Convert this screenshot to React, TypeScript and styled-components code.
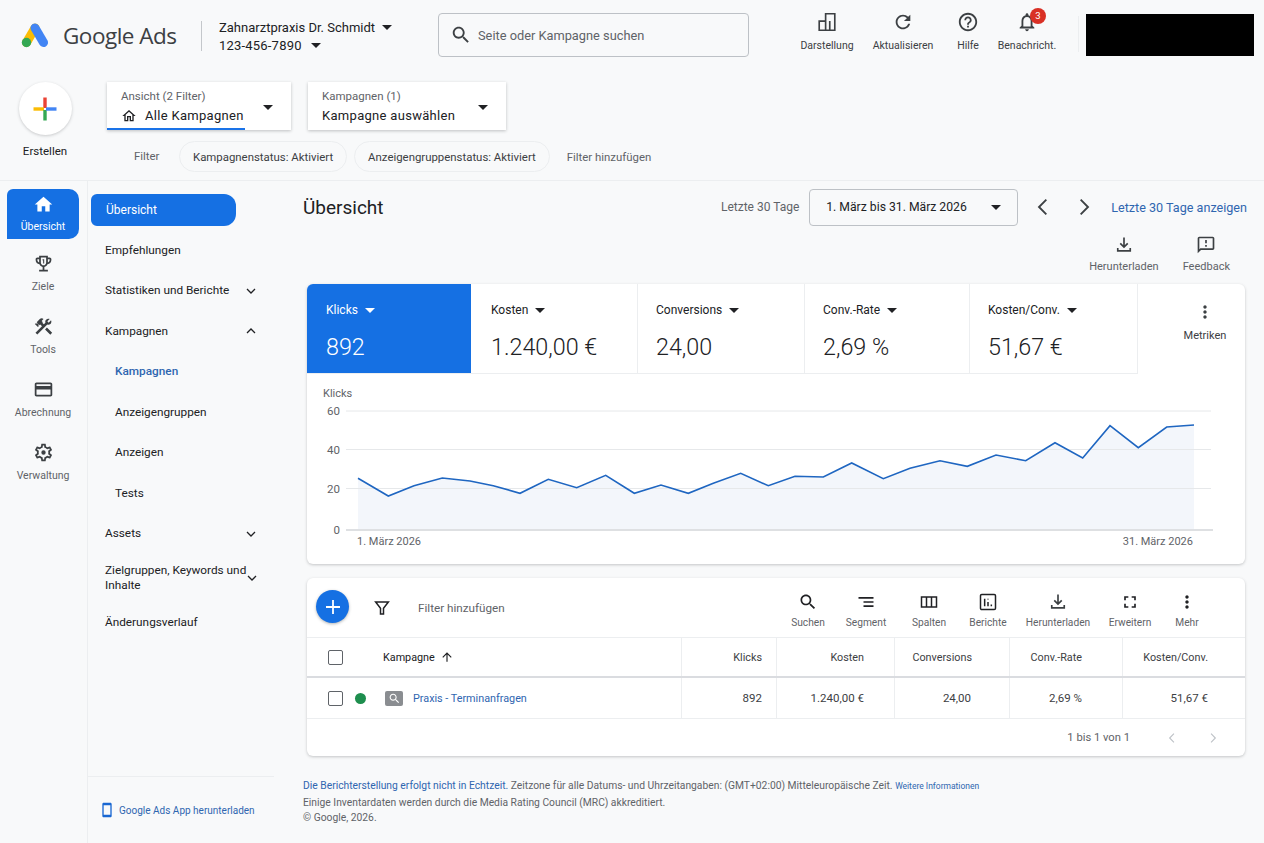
import React from "react";
import styled, { createGlobalStyle } from "styled-components";

const GlobalStyle = createGlobalStyle`
  html, body {
    margin: 0;
    padding: 0;
    background: #f8f9fa;
    font-family: Roboto, "Liberation Sans", sans-serif;
    color: #202124;
  }
  * { box-sizing: border-box; }
`;

const BLUE = "#1a73e8";
const LINK = "#2f66b0";

const Page = styled.div`
  width: 1264px;
  height: 843px;
  overflow: hidden;
  display: flex;
  flex-direction: column;
`;

/* top bar */
const TopBar = styled.header`
  height: 70px;
  display: flex;
  align-items: flex-start;
  padding: 13px 10px 0 21px;
`;
const Brand = styled.div`
  display: flex;
  align-items: center;
  gap: 14px;
  width: 180px;
  height: 44px;
  flex: none;
`;
const BrandName = styled.span`
  font-family: "Open Sans", Roboto, sans-serif;
  font-size: 22.5px;
  letter-spacing: -0.5px;
  color: #3c4043;
  white-space: nowrap;
`;
const AccountBox = styled.div`
  height: 30px;
  margin-top: 8px;
  border-left: 1px solid #c4c7cb;
  padding-left: 17px;
  width: 237px;
  flex: none;
  display: flex;
  flex-direction: column;
  justify-content: center;
  gap: 3px;
  font-size: 13px;
  color: #202124;
`;
const AccountLine = styled.div<{ $wide?: boolean }>`
  display: flex;
  align-items: center;
  gap: ${(p) => (p.$wide ? 9 : 7)}px;
  white-space: nowrap;
  line-height: 15px;
  letter-spacing: ${(p) => (p.$wide ? "0.2px" : "0")};
`;
const Caret = styled.span<{ $color?: string }>`
  display: inline-block;
  width: 0;
  height: 0;
  border-left: 5px solid transparent;
  border-right: 5px solid transparent;
  border-top: 5px solid ${(p) => p.$color || "#202124"};
  flex: none;
`;
const SearchBox = styled.div`
  width: 311px;
  height: 44px;
  flex: none;
  border: 1px solid #bdc1c6;
  border-radius: 4px;
  display: flex;
  align-items: center;
  gap: 6px;
  padding-left: 11px;
  font-size: 12.8px;
  color: #5f6368;
`;
const TopActions = styled.div`
  display: flex;
  flex: none;
  margin-left: 42px;
  margin-top: -3px;
`;
const TopAction = styled.div<{ $w: number }>`
  position: relative;
  width: ${(p) => p.$w}px;
  padding-top: 1px;
  display: flex;
  flex-direction: column;
  align-items: center;
  gap: 6px;
  font-size: 10.5px;
  color: #3c4043;
  white-space: nowrap;
`;
const Badge = styled.span`
  position: absolute;
  top: -2px;
  left: 50%;
  margin-left: 3px;
  width: 16px;
  height: 16px;
  border-radius: 50%;
  background: #d93025;
  color: #fff;
  font-size: 9.5px;
  line-height: 16px;
  text-align: center;
`;
const Redacted = styled.div`
  width: 168px;
  height: 42px;
  flex: none;
  margin-top: 1px;
  background: #000;
  margin-left: 7px;
`;
const ThinDivider = styled.div`
  width: 1px;
  height: 36px;
  flex: none;
  margin: 3px 0 0 17px;
  background: #eceef0;
`;

/* create + filter */
const CreateRow = styled.section`
  height: 111px;
  display: flex;
  border-bottom: 1px solid #eceef0;
`;
const CreateCol = styled.div`
  width: 90px;
  display: flex;
  flex-direction: column;
  align-items: center;
  gap: 9px;
  font-size: 11.5px;
`;
const CreateButton = styled.div`
  width: 53px;
  height: 53px;
  margin-top: 12px;
  border-radius: 50%;
  background: #fff;
  box-shadow: 0 1px 3px rgba(60, 64, 67, 0.25);
  display: flex;
  align-items: center;
  justify-content: center;
`;
const SelectCol = styled.div`
  padding: 12px 0 0 17px;
  display: flex;
  flex-direction: column;
  gap: 11px;
`;
const SelectRow = styled.div`
  display: flex;
  gap: 17px;
`;
const SelectCard = styled.div<{ $w: number }>`
  position: relative;
  width: ${(p) => p.$w}px;
  height: 48px;
  background: #fff;
  box-shadow: 0 1px 3px rgba(60, 64, 67, 0.3);
  padding: 3px 18px 0 14px;
  display: flex;
  align-items: center;
  justify-content: space-between;
`;
const SelectUnderline = styled.span`
  position: absolute;
  left: 0;
  bottom: 0;
  width: 138px;
  height: 2px;
  background: ${BLUE};
`;
const SelectHint = styled.div`
  font-size: 11.5px;
  color: #5f6368;
  margin-bottom: 5px;
  margin-top: -3px;
`;
const SelectValue = styled.div`
  display: flex;
  align-items: center;
  gap: 8px;
  font-size: 13px;
  letter-spacing: 0.3px;
  color: #202124;
  white-space: nowrap;
`;
const FilterRow = styled.div`
  display: flex;
  align-items: center;
  padding-left: 27px;
  font-size: 11.4px;
  color: #5f6368;
`;
const Chip = styled.span`
  height: 31px;
  border: 1px solid #eceef0;
  border-radius: 16px;
  padding: 0 13px;
  margin-right: 7px;
  display: flex;
  align-items: center;
  color: #3c4043;
  white-space: nowrap;
`;
const FilterLabel = styled.span`
  width: 45px;
  margin-top: -1px;
`;
const FilterAdd = styled.span`
  margin-left: 10px;
`;

/* body */
const Body = styled.div`
  flex: 1;
  display: flex;
  min-height: 0;
`;
const Rail = styled.nav`
  width: 88px;
  flex: none;
  border-right: 1px solid #eceef0;
  padding: 8px 0 0 7px;
  display: flex;
  flex-direction: column;
  gap: 13px;
`;
const RailItem = styled.div<{ $active?: boolean }>`
  width: 72px;
  height: 50px;
  border-radius: 6px 10px 10px 0;
  background: ${(p) => (p.$active ? "#1570e3" : "transparent")};
  color: ${(p) => (p.$active ? "#fff" : "#5f6368")};
  display: flex;
  flex-direction: column;
  align-items: center;
  padding-top: ${(p) => (p.$active ? 5 : 1)}px;
  gap: ${(p) => (p.$active ? 5 : 6)}px;
  font-size: 10.5px;
  svg {
    color: ${(p) => (p.$active ? "#fff" : "#3c4043")};
  }
`;
const SubNav = styled.nav`
  width: 187px;
  flex: none;
  display: flex;
  flex-direction: column;
  padding-top: 13px;
`;
const NavPill = styled.div`
  width: 145px;
  height: 32px;
  margin-left: 3px;
  border-radius: 6px 12px 12px 6px;
  background: #1570e3;
  color: #fff;
  padding: 0 0 1px 15px;
  display: flex;
  align-items: center;
  font-size: 12px;
  margin-bottom: 4px;
`;
const NavItem = styled.div<{ $indent?: boolean; $link?: boolean; $h?: number }>`
  height: ${(p) => p.$h || 40.5}px;
  padding-left: ${(p) => (p.$indent ? 27 : 17)}px;
  padding-right: 18px;
  display: flex;
  align-items: center;
  justify-content: space-between;
  font-size: 11.8px;
  line-height: 15px;
  white-space: nowrap;
  color: ${(p) => (p.$link ? LINK : "#202124")};
  font-weight: ${(p) => (p.$link ? 500 : 400)};
`;
const NavFoot = styled.div`
  margin: auto 1px 0 0;
  height: 67px;
  border-top: 1px solid #eceef0;
  display: flex;
  align-items: center;
  gap: 4px;
  padding-left: 11px;
  font-size: 10px;
  color: ${LINK};
  white-space: nowrap;
`;
const Main = styled.main`
  flex: 1;
  padding: 8px 17px 0 28px;
  display: flex;
  flex-direction: column;
`;
const TitleRow = styled.div`
  height: 36px;
  display: flex;
  align-items: center;
`;
const Title = styled.h1`
  margin: 0;
  font-size: 19px;
  font-weight: 400;
  color: #202124;
  margin-right: auto;
`;
const RangeLabel = styled.span`
  font-size: 12px;
  color: #5f6368;
  margin-right: 10px;
`;
const RangeBox = styled.div`
  width: 209px;
  height: 37px;
  border: 1px solid #bdc1c6;
  border-radius: 4px;
  display: flex;
  align-items: center;
  justify-content: space-between;
  padding: 0 16px;
  font-size: 12.2px;
  color: #202124;
`;
const ArrowPair = styled.div`
  display: flex;
  gap: 17px;
  margin: 0 15px 0 13px;
`;
const RangeLink = styled.span`
  font-size: 12.6px;
  color: ${LINK};
  white-space: nowrap;
`;
const ActionRow = styled.div`
  height: 59px;
  display: flex;
  justify-content: flex-end;
  padding: 10px 17px 0 0;
  gap: 24px;
`;
const ToolAction = styled.div<{ $w?: number; $small?: boolean }>`
  width: ${(p) => (p.$w ? `${p.$w}px` : "auto")};
  display: flex;
  flex-direction: column;
  align-items: center;
  gap: 4.5px;
  font-size: ${(p) => (p.$small ? 10.2 : 11)}px;
  color: #5f6368;
  white-space: nowrap;
`;
const Card = styled.section<{ $h: number }>`
  width: 938px;
  height: ${(p) => p.$h}px;
  margin-left: 4px;
  background: #fff;
  border-radius: 6px;
  box-shadow: 0 1px 3px rgba(60, 64, 67, 0.28);
  overflow: hidden;
`;
const Tiles = styled.div`
  height: 90px;
  display: flex;
`;
const Tile = styled.div<{ $w: number; $pad: number; $active?: boolean }>`
  width: ${(p) => p.$w}px;
  height: 90px;
  padding: 19px 0 0 ${(p) => p.$pad}px;
  background: ${(p) => (p.$active ? "#1570e3" : "#fff")};
  color: ${(p) => (p.$active ? "#fff" : "#202124")};
  border-right: ${(p) => (p.$active ? "none" : "1px solid #eceef0")};
  border-bottom: 1px solid #eceef0;
`;
const TileLabel = styled.div`
  display: flex;
  align-items: center;
  gap: 7px;
  font-size: 12px;
  line-height: 15px;
`;
const TileValue = styled.div`
  margin-top: 14px;
  font-size: 23.3px;
  font-weight: 300;
  line-height: 30px;
`;
const MetricsButton = styled.div`
  flex: 1;
  display: flex;
  flex-direction: column;
  align-items: center;
  padding: 18px 0 0 27px;
  gap: 7px;
  font-size: 11px;
  color: #3c4043;
`;
const ChartSvg = styled.svg`
  display: block;
  font-family: Roboto, sans-serif;
`;
const Gap = styled.div`
  height: 14px;
  flex: none;
`;
const TableBar = styled.div`
  height: 60px;
  display: flex;
  align-items: center;
  border-bottom: 1px solid #eceef0;
  padding-left: 9px;
`;
const Fab = styled.div`
  width: 33px;
  height: 33px;
  margin-top: -2px;
  border-radius: 50%;
  background: #1570e3;
  box-shadow: 0 1px 3px rgba(60, 64, 67, 0.4);
  display: flex;
  align-items: center;
  justify-content: center;
  margin-right: 24px;
`;
const TableFilter = styled.span`
  font-size: 11.7px;
  color: #5f6368;
  margin-left: 27px;
  margin-right: auto;
`;
const BarActions = styled.div`
  display: flex;
  padding: 5px 28px 0 0;
`;
const Row = styled.div<{ $h: number; $heavy?: boolean }>`
  height: ${(p) => p.$h}px;
  display: grid;
  grid-template-columns: 374px 95px 118px 115px 113px 1fr;
  border-bottom: ${(p) => (p.$heavy ? "2px solid #dadce0" : "1px solid #eceef0")};
`;
const Cell = styled.div<{ $pad?: number; $head?: boolean }>`
  border-left: 1px solid #eceef0;
  display: flex;
  align-items: center;
  justify-content: flex-end;
  padding-right: ${(p) => p.$pad ?? 14}px;
  font-size: ${(p) => (p.$head ? 10.8 : 11.5)}px;
  color: #3c4043;
`;
const NameCell = styled.div`
  display: flex;
  align-items: center;
  padding-left: 21px;
  font-size: 10.8px;
  color: #202124;
`;
const Check = styled.span`
  width: 15px;
  height: 15px;
  border: 1.5px solid #5f6368;
  border-radius: 2px;
  flex: none;
  background: #fff;
`;
const StatusDot = styled.span`
  width: 11px;
  height: 11px;
  border-radius: 50%;
  background: #1e8e4e;
  margin: 0 19px 0 12px;
  flex: none;
`;
const TypeIcon = styled.span`
  width: 18px;
  height: 15px;
  border-radius: 2px;
  background: #8a8d91;
  display: flex;
  align-items: center;
  justify-content: center;
  margin-right: 10px;
  flex: none;
`;
const CampaignLink = styled.span`
  color: ${LINK};
  font-size: 10.8px;
`;
const HeadName = styled.span`
  margin-left: 40px;
  display: flex;
  align-items: center;
  gap: 5px;
`;
const Pager = styled.div`
  height: 37px;
  display: flex;
  align-items: center;
  justify-content: flex-end;
  padding-right: 25px;
  font-size: 11.2px;
  color: #5f6368;
  gap: 35px;
`;
const PagerArrows = styled.div`
  display: flex;
  gap: 27px;
`;
const Footer = styled.footer`
  margin-top: 22px;
  font-size: 10.3px;
  line-height: 15.5px;
  color: #5f6368;
  white-space: nowrap;
`;
const FootLink = styled.span`
  color: ${LINK};
`;
const TinyLink = styled.span`
  color: ${LINK};
  font-size: 8.5px;
`;

const Icon: React.FC<{ size?: number; d: string; color?: string }> = ({ size = 24, d, color = "currentColor" }) => (
  <svg width={size} height={size} viewBox="0 0 24 24" fill={color}>
    <path d={d} />
  </svg>
);

const ChevronDown = ({ up }: { up?: boolean }) => (
  <svg width="12" height="12" viewBox="0 0 12 12" fill="none" stroke="#202124" strokeWidth="1.3" style={{ flex: "none" }}>
    <path d={up ? "M2 8l4-4 4 4" : "M2 4l4 4 4-4"} />
  </svg>
);
const ChevronSide = ({ left, size = 18, color = "#3c4043" }: { left?: boolean; size?: number; color?: string }) => (
  <svg width={size} height={size} viewBox="0 0 18 18" fill="none" stroke={color} strokeWidth="1.4">
    <path d={left ? "M11.5 3.5L6 9l5.5 5.5" : "M6.5 3.5L12 9l-5.5 5.5"} />
  </svg>
);

const P = {
  home: "M12 5.69l5 4.5V18h-2v-6H9v6H7v-7.81l5-4.5M12 3L2 12h3v8h6v-6h2v6h6v-8h3L12 3z",
  homeFill: "M10 20v-6h4v6h5v-8h3L12 3 2 12h3v8z",
  search:
    "M15.5 14h-.79l-.28-.27C15.41 12.59 16 11.11 16 9.5 16 5.91 13.09 3 9.5 3S3 5.91 3 9.5 5.91 16 9.5 16c1.61 0 3.09-.59 4.23-1.57l.27.28v.79l5 4.99L20.49 19l-4.99-5zm-6 0C7.01 14 5 11.99 5 9.5S7.01 5 9.5 5 14 7.01 14 9.5 11.99 14 9.5 14z",
  refresh:
    "M17.65 6.35C16.2 4.9 14.21 4 12 4c-4.42 0-7.99 3.58-7.99 8s3.57 8 7.99 8c3.73 0 6.84-2.55 7.73-6h-2.08c-.82 2.33-3.04 4-5.65 4-3.31 0-6-2.69-6-6s2.69-6 6-6c1.66 0 3.14.69 4.22 1.78L13 11h7V4l-2.35 2.35z",
  help: "M11 18h2v-2h-2v2zm1-16C6.48 2 2 6.48 2 12s4.48 10 10 10 10-4.48 10-10S17.52 2 12 2zm0 18c-4.41 0-8-3.59-8-8s3.59-8 8-8 8 3.59 8 8-3.59 8-8 8zm0-14c-2.21 0-4 1.79-4 4h2c0-1.1.9-2 2-2s2 .9 2 2c0 2-3 1.75-3 5h2c0-2.25 3-2.5 3-5 0-2.21-1.79-4-4-4z",
  bell: "M12 22c1.1 0 2-.9 2-2h-4c0 1.1.9 2 2 2zm6-6v-5c0-3.07-1.63-5.64-4.5-6.32V4c0-.83-.67-1.5-1.5-1.5s-1.5.67-1.5 1.5v.68C7.64 5.36 6 7.92 6 11v5l-2 2v1h16v-1l-2-2zm-2 1H8v-6c0-2.48 1.51-4.5 4-4.5s4 2.02 4 4.5v6z",
  more: "M12 8c1.1 0 2-.9 2-2s-.9-2-2-2-2 .9-2 2 .9 2 2 2zm0 2c-1.1 0-2 .9-2 2s.9 2 2 2 2-.9 2-2-.9-2-2-2zm0 6c-1.1 0-2 .9-2 2s.9 2 2 2 2-.9 2-2-.9-2-2-2z",
  card: "M20 4H4c-1.11 0-1.99.89-1.99 2L2 18c0 1.11.89 2 2 2h16c1.11 0 2-.89 2-2V6c0-1.11-.89-2-2-2zm0 14H4v-6h16v6zm0-10H4V6h16v2z",
  gear: "M19.43 12.98c.04-.32.07-.64.07-.98 0-.34-.03-.66-.07-.98l2.11-1.65c.19-.15.24-.42.12-.64l-2-3.46c-.09-.16-.26-.25-.44-.25-.06 0-.12.01-.17.03l-2.49 1c-.52-.4-1.08-.73-1.69-.98l-.38-2.65C14.46 2.18 14.25 2 14 2h-4c-.25 0-.46.18-.49.42l-.38 2.65c-.61.25-1.17.59-1.69.98l-2.49-1c-.06-.02-.12-.03-.18-.03-.17 0-.34.09-.43.25l-2 3.46c-.13.22-.07.49.12.64l2.11 1.65c-.04.32-.07.65-.07.98 0 .33.03.66.07.98l-2.11 1.65c-.19.15-.24.42-.12.64l2 3.46c.09.16.26.25.44.25.06 0 .12-.01.17-.03l2.49-1c.52.4 1.08.73 1.69.98l.38 2.65c.03.24.24.42.49.42h4c.25 0 .46-.18.49-.42l.38-2.65c.61-.25 1.17-.59 1.69-.98l2.49 1c.06.02.12.03.18.03.17 0 .34-.09.43-.25l2-3.46c.12-.22.07-.49-.12-.64l-2.11-1.65zm-1.98-1.71c.04.31.05.52.05.73 0 .21-.02.43-.05.73l-.14 1.13.89.7 1.08.84-.7 1.21-1.27-.51-1.04-.42-.9.68c-.43.32-.84.56-1.25.73l-1.06.43-.16 1.13-.2 1.35h-1.4l-.19-1.35-.16-1.13-1.06-.43c-.43-.18-.83-.41-1.23-.71l-.91-.7-1.06.43-1.27.51-.7-1.21 1.08-.84.89-.7-.14-1.13c-.03-.31-.05-.54-.05-.74s.02-.43.05-.73l.14-1.13-.89-.7-1.08-.84.7-1.21 1.27.51 1.04.42.9-.68c.43-.32.84-.56 1.25-.73l1.06-.43.16-1.13.2-1.35h1.39l.19 1.35.16 1.13 1.06.43c.43.18.83.41 1.23.71l.91.7 1.06-.43 1.27-.51.7 1.21-1.07.85-.89.7.14 1.13zM12 9.5a2.5 2.5 0 1 0 0 5 2.5 2.5 0 0 0 0-5z",
  trophy:
    "M19 5h-2V3H7v2H5c-1.1 0-2 .9-2 2v1c0 2.55 1.92 4.63 4.39 4.94.63 1.5 1.98 2.63 3.61 2.96V19H7v2h10v-2h-4v-3.1c1.63-.33 2.98-1.46 3.61-2.96C19.08 12.63 21 10.55 21 8V7c0-1.1-.9-2-2-2zM5 8V7h2v3.82C5.84 10.4 5 9.3 5 8zm7 6c-1.65 0-3-1.35-3-3V5h6v6c0 1.65-1.35 3-3 3zm7-6c0 1.3-.84 2.4-2 2.82V7h2v1zM11.6 7h1.2v5h-1.2V8.2h-1V7.6z",
  tools:
    "M13.78 15.3l6 6 2.11-2.16-6-6zM17.5 10c1.93 0 3.5-1.57 3.5-3.5 0-.58-.16-1.12-.41-1.6l-2.7 2.7-1.49-1.49 2.7-2.7c-.48-.25-1.02-.41-1.6-.41C15.57 3 14 4.57 14 6.5c0 .41.08.8.21 1.16l-1.85 1.85-1.78-1.78.71-.71-1.41-1.41L12 3.49c-1.17-1.17-3.07-1.17-4.24 0L4.22 7.03l1.41 1.41H2.81l-.71.71 3.54 3.54.71-.71V9.15l1.41 1.41.71-.71 1.78 1.78-7.41 7.41 2.12 2.12L16.34 9.79c.36.13.75.21 1.16.21z",
  download: "M12 3v11.2M7.5 10l4.5 4.5 4.5-4.5M4.5 15.5V19h15v-3.5",
  feedback:
    "M20 2H4c-1.1 0-2 .9-2 2v18l4-4h14c1.1 0 2-.9 2-2V4c0-1.1-.9-2-2-2zm0 14H5.17L4 17.17V4h16v12zM11 12h2v2h-2zm0-6h2v4h-2z",
  segment: "M9 18h12v-2H9v2zM3 6v2h18V6H3zm6 7h12v-2H9v2z",
  fullscreen: "M7 14H5v5h5v-2H7v-3zm-2-4h2V7h3V5H5v5zm12 7h-3v2h5v-5h-2v3zM14 5v2h3v3h2V5h-5z",
  arrowUp: "M4 12l1.41 1.41L11 7.83V20h2V7.83l5.58 5.59L20 12l-8-8-8 8z",
  phone: "M17 1.01L7 1c-1.1 0-2 .9-2 2v18c0 1.1.9 2 2 2h10c1.1 0 2-.9 2-2V3c0-1.1-.9-1.99-2-1.99zM17 19H7V5h10v14z",
};

const DownloadIcon = () => (
  <svg width="20" height="20" viewBox="0 0 24 24" fill="none" stroke="#3c4043" strokeWidth="2">
    <path d={P.download} />
  </svg>
);

const AdsLogo = () => (
  <svg width="28" height="26" viewBox="0 0 28 26" style={{ flex: "none" }}>
    <line x1="14" y1="6" x2="5.5" y2="20.5" stroke="#fbbc04" strokeWidth="9" strokeLinecap="round" />
    <line x1="14" y1="6" x2="22.5" y2="20.5" stroke="#4285f4" strokeWidth="9" strokeLinecap="round" />
    <circle cx="5.5" cy="20.5" r="4.7" fill="#34a853" />
  </svg>
);

const ColorPlus = () => (
  <svg width="26" height="26" viewBox="0 0 26 26" fill="none" strokeWidth="3.4">
    <path d="M13 1.5V12" stroke="#ea4335" />
    <path d="M1.5 13H12" stroke="#fbbc04" />
    <path d="M13 14v10.5" stroke="#34a853" />
    <path d="M14 13h10.5" stroke="#4285f4" />
  </svg>
);

const DarstellungIcon = () => (
  <svg width="22" height="22" viewBox="0 0 24 24" fill="none" stroke="#3c4043" strokeWidth="1.8">
    <path d="M3.5 11h7v10h-7zM10.5 3h10v18h-10zM15 11v10" />
  </svg>
);
const ColumnsIcon = () => (
  <svg width="20" height="20" viewBox="0 0 24 24" fill="none" stroke="#202124" strokeWidth="1.8">
    <path d="M3 6h18v12H3zM9 6v12M15 6v12" />
  </svg>
);
const ReportIcon = () => (
  <svg width="20" height="20" viewBox="0 0 24 24" fill="none" stroke="#202124" strokeWidth="1.8">
    <rect x="3" y="3" width="18" height="18" rx="1.5" />
    <path d="M8 8v9M12 12v5M16 15v2M12 8v1" />
  </svg>
);
const FunnelIcon = () => (
  <svg width="18" height="18" viewBox="0 0 24 24" fill="none" stroke="#202124" strokeWidth="2">
    <path d="M3.5 4h17L14 12.5V20h-4v-7.5z" />
  </svg>
);

const navItems: { label: React.ReactNode; chev?: "up" | "down"; indent?: boolean; link?: boolean; h?: number }[] = [
  { label: "Empfehlungen" },
  { label: "Statistiken und Berichte", chev: "down" },
  { label: "Kampagnen", chev: "up" },
  { label: "Kampagnen", indent: true, link: true },
  { label: "Anzeigengruppen", indent: true },
  { label: "Anzeigen", indent: true },
  { label: "Tests", indent: true },
  { label: "Assets", chev: "down" },
  { label: <>Zielgruppen, Keywords und<br />Inhalte</>, chev: "down", h: 48 },
  { label: "Änderungsverlauf", h: 40 },
];

const tiles = [
  { label: "Klicks", value: "892", w: 164, pad: 19 },
  { label: "Kosten", value: "1.240,00 €", w: 167, pad: 20 },
  { label: "Conversions", value: "24,00", w: 167, pad: 18 },
  { label: "Conv.-Rate", value: "2,69 %", w: 165, pad: 18 },
  { label: "Kosten/Conv.", value: "51,67 €", w: 168, pad: 18 },
];

const barActions = [
  { label: "Suchen", w: 58, icon: <Icon size={20} d={P.search} color="#202124" /> },
  { label: "Segment", w: 58, icon: <Icon size={20} d={P.segment} color="#202124" /> },
  { label: "Spalten", w: 68, icon: <ColumnsIcon /> },
  { label: "Berichte", w: 50, icon: <ReportIcon /> },
  { label: "Herunterladen", w: 90, icon: <DownloadIcon /> },
  { label: "Erweitern", w: 54, icon: <Icon size={20} d={P.fullscreen} color="#202124" /> },
  { label: "Mehr", w: 60, icon: <Icon size={20} d={P.more} color="#202124" /> },
];

const clicks: [number, number][] = [
  [358, 478.3], [388.3, 496], [414, 485.7], [442.3, 478], [470, 481], [493.3, 485.7], [520, 493.3],
  [548.3, 479.3], [576.7, 487.7], [605.7, 475.3], [634.3, 493.3], [661, 485], [688.3, 493.3],
  [713.3, 483.3], [740.7, 473.3], [768.3, 485.7], [795, 476.3], [823.3, 477], [851.7, 463],
  [883.3, 478.7], [910, 468.3], [940, 460.7], [967.3, 466.3], [996, 455], [1025.7, 460.7],
  [1055, 442.7], [1082.7, 458], [1110, 425.7], [1138.3, 447.7], [1166.7, 427], [1194, 425],
];

const Chart = () => {
  const line = clicks.map((p) => p.join(",")).join(" ");
  const grid: [string, number][] = [["60", 411], ["40", 449.5], ["20", 488.5]];
  return (
    <ChartSvg width="938" height="190" viewBox="307 374 938 190">
      <polygon points={`358,529 ${line} 1194,529`} fill="#f3f6fb" />
      <text x="323" y="397" fontSize="11" fill="#5f6368">Klicks</text>
      {grid.map(([label, y]) => (
        <g key={label}>
          <line x1="346" x2="1211" y1={y} y2={y} stroke="#e6e8ea" />
          <text x="340" y={y + 4} fontSize="11.5" fill="#5f6368" textAnchor="end">{label}</text>
        </g>
      ))}
      <line x1="346" x2="1213" y1="530" y2="530" stroke="#bdc1c6" />
      <text x="340" y="534" fontSize="11.5" fill="#5f6368" textAnchor="end">0</text>
      <polyline points={line} fill="none" stroke="#1f66c1" strokeWidth="1.6" />
      <text x="357" y="545" fontSize="11" fill="#5f6368">1. März 2026</text>
      <text x="1193" y="545" fontSize="11" fill="#5f6368" textAnchor="end">31. März 2026</text>
    </ChartSvg>
  );
};

export default function App() {
  return (
    <Page>
      <GlobalStyle />
      <TopBar>
        <Brand>
          <AdsLogo />
          <BrandName>Google Ads</BrandName>
        </Brand>
        <AccountBox>
          <AccountLine>Zahnarztpraxis Dr. Schmidt <Caret /></AccountLine>
          <AccountLine $wide>123-456-7890 <Caret /></AccountLine>
        </AccountBox>
        <SearchBox>
          <Icon size={22} d={P.search} color="#3c4043" />
          Seite oder Kampagne suchen
        </SearchBox>
        <TopActions>
          <TopAction $w={72}><DarstellungIcon />Darstellung</TopAction>
          <TopAction $w={80}><Icon size={22} d={P.refresh} color="#3c4043" />Aktualisieren</TopAction>
          <TopAction $w={50}><Icon size={22} d={P.help} color="#3c4043" />Hilfe</TopAction>
          <TopAction $w={68}>
            <Icon size={22} d={P.bell} color="#3c4043" />
            <Badge>3</Badge>
            Benachricht.
          </TopAction>
        </TopActions>
        <ThinDivider />
        <Redacted />
      </TopBar>

      <CreateRow>
        <CreateCol>
          <CreateButton><ColorPlus /></CreateButton>
          Erstellen
        </CreateCol>
        <SelectCol>
          <SelectRow>
            <SelectCard $w={184}>
              <div>
                <SelectHint>Ansicht (2 Filter)</SelectHint>
                <SelectValue><Icon size={16} d={P.home} color="#202124" />Alle Kampagnen</SelectValue>
              </div>
              <Caret />
              <SelectUnderline />
            </SelectCard>
            <SelectCard $w={198}>
              <div>
                <SelectHint>Kampagnen (1)</SelectHint>
                <SelectValue>Kampagne auswählen</SelectValue>
              </div>
              <Caret />
            </SelectCard>
          </SelectRow>
          <FilterRow>
            <FilterLabel>Filter</FilterLabel>
            <Chip>Kampagnenstatus: Aktiviert</Chip>
            <Chip>Anzeigengruppenstatus: Aktiviert</Chip>
            <FilterAdd>Filter hinzufügen</FilterAdd>
          </FilterRow>
        </SelectCol>
      </CreateRow>

      <Body>
        <Rail>
          <RailItem $active><Icon size={21} d={P.homeFill} />Übersicht</RailItem>
          <RailItem><Icon size={21} d={P.trophy} />Ziele</RailItem>
          <RailItem><Icon size={21} d={P.tools} />Tools</RailItem>
          <RailItem><Icon size={21} d={P.card} />Abrechnung</RailItem>
          <RailItem><Icon size={21} d={P.gear} />Verwaltung</RailItem>
        </Rail>
        <SubNav>
          <NavPill>Übersicht</NavPill>
          {navItems.map((item, i) => (
            <NavItem key={i} $indent={item.indent} $link={item.link} $h={item.h}>
              <span>{item.label}</span>
              {item.chev && <ChevronDown up={item.chev === "up"} />}
            </NavItem>
          ))}
          <NavFoot>
            <Icon size={16} d={P.phone} color="#1967d2" />
            Google Ads App herunterladen
          </NavFoot>
        </SubNav>
        <Main>
          <TitleRow>
            <Title>Übersicht</Title>
            <RangeLabel>Letzte 30 Tage</RangeLabel>
            <RangeBox>1. März bis 31. März 2026 <Caret /></RangeBox>
            <ArrowPair>
              <ChevronSide left size={24} />
              <ChevronSide size={24} />
            </ArrowPair>
            <RangeLink>Letzte 30 Tage anzeigen</RangeLink>
          </TitleRow>
          <ActionRow>
            <ToolAction><DownloadIcon />Herunterladen</ToolAction>
            <ToolAction><Icon size={20} d={P.feedback} color="#3c4043" />Feedback</ToolAction>
          </ActionRow>

          <Card $h={280}>
            <Tiles>
              {tiles.map((t, i) => (
                <Tile key={t.label} $w={t.w} $pad={t.pad} $active={i === 0}>
                  <TileLabel>{t.label} <Caret $color={i === 0 ? "#fff" : "#202124"} /></TileLabel>
                  <TileValue>{t.value}</TileValue>
                </Tile>
              ))}
              <MetricsButton>
                <Icon size={20} d={P.more} color="#3c4043" />
                Metriken
              </MetricsButton>
            </Tiles>
            <Chart />
          </Card>

          <Gap />

          <Card $h={178}>
            <TableBar>
              <Fab>
                <svg width="18" height="18" viewBox="0 0 18 18" stroke="#fff" strokeWidth="1.8">
                  <path d="M9 2v14M2 9h14" />
                </svg>
              </Fab>
              <FunnelIcon />
              <TableFilter>Filter hinzufügen</TableFilter>
              <BarActions>
                {barActions.map((a) => (
                  <ToolAction key={a.label} $w={a.w} $small>{a.icon}{a.label}</ToolAction>
                ))}
              </BarActions>
            </TableBar>
            <Row $h={40} $heavy>
              <NameCell>
                <Check />
                <HeadName>Kampagne <Icon size={14} d={P.arrowUp} color="#202124" /></HeadName>
              </NameCell>
              <Cell $head>Klicks</Cell>
              <Cell $head $pad={30}>Kosten</Cell>
              <Cell $head $pad={37}>Conversions</Cell>
              <Cell $head $pad={40}>Conv.-Rate</Cell>
              <Cell $head $pad={37}>Kosten/Conv.</Cell>
            </Row>
            <Row $h={41}>
              <NameCell>
                <Check />
                <StatusDot />
                <TypeIcon><Icon size={13} d={P.search} color="#fff" /></TypeIcon>
                <CampaignLink>Praxis - Terminanfragen</CampaignLink>
              </NameCell>
              <Cell>892</Cell>
              <Cell $pad={30}>1.240,00 €</Cell>
              <Cell $pad={38}>24,00</Cell>
              <Cell $pad={40}>2,69 %</Cell>
              <Cell $pad={37}>51,67 €</Cell>
            </Row>
            <Pager>
              1 bis 1 von 1
              <PagerArrows>
                <ChevronSide left size={14} color="#bdc1c6" />
                <ChevronSide size={14} color="#bdc1c6" />
              </PagerArrows>
            </Pager>
          </Card>

          <Footer>
            <FootLink>Die Berichterstellung erfolgt nicht in Echtzeit.</FootLink> Zeitzone für alle Datums- und Uhrzeitangaben: (GMT+02:00) Mitteleuropäische Zeit. <TinyLink>Weitere Informationen</TinyLink>
            <br />
            Einige Inventardaten werden durch die Media Rating Council (MRC) akkreditiert.
            <br />
            © Google, 2026.
          </Footer>
        </Main>
      </Body>
    </Page>
  );
}
